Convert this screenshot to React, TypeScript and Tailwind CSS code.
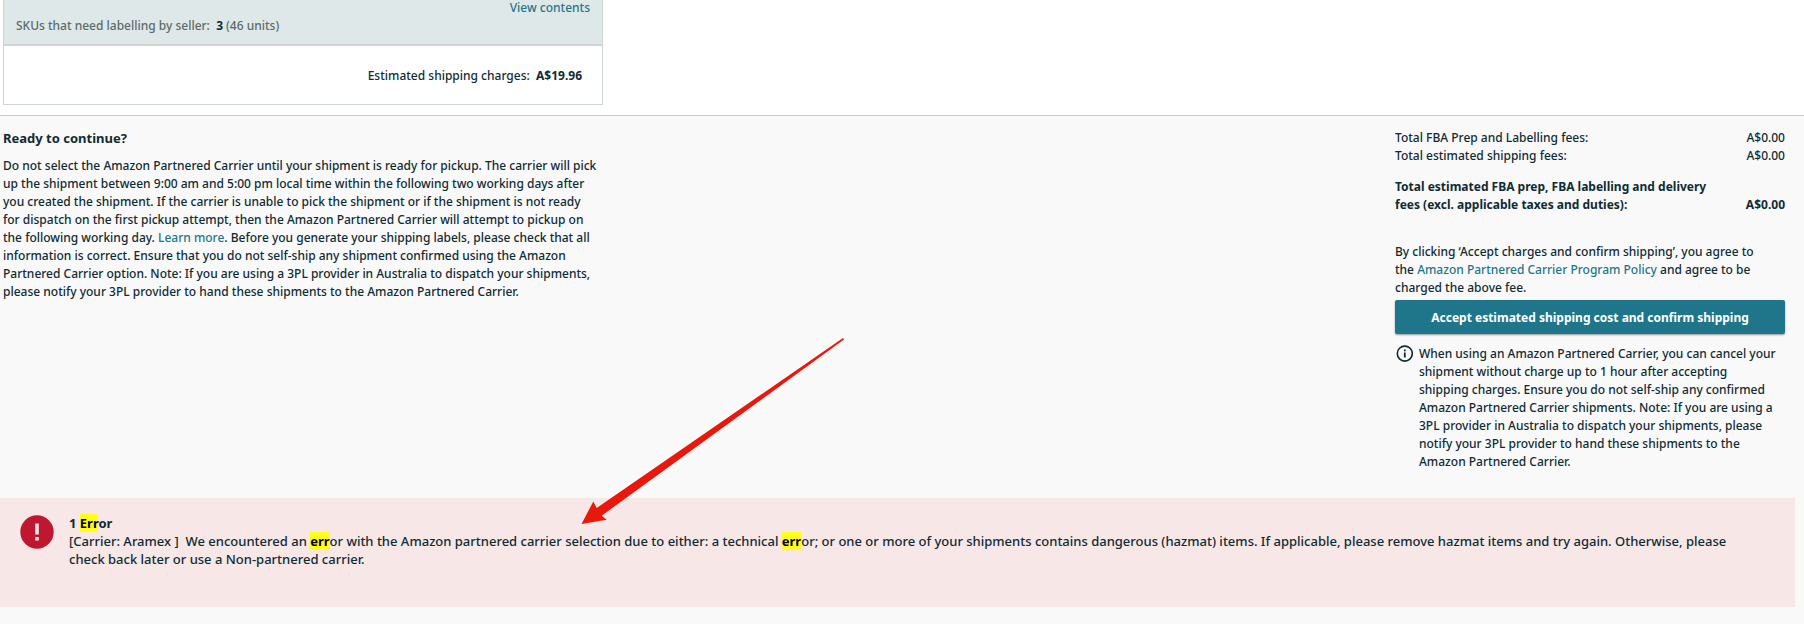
import React from 'react';

interface Fee {
  label: string;
  amount: string;
}

const fees: Fee[] = [
  { label: 'Total FBA Prep and Labelling fees:', amount: 'A$0.00' },
  { label: 'Total estimated shipping fees:', amount: 'A$0.00' },
];

const Mark: React.FC<{ children: React.ReactNode }> = ({ children }) => (
  <mark className="bg-[#ffff1a] font-bold text-black">{children}</mark>
);

const ShipmentSummary: React.FC = () => (
  <section className="ml-[3px] w-[600px] border border-t-0 border-[#cdd5d5] bg-white">
    <div className="border-b-2 border-[#cdd5d5] bg-[#dfe8e8] px-3 pb-[9px] text-[#5b6b6b]">
      <p className="-mt-px text-right">
        <a href="#contents" className="text-[#1f768a]">View contents</a>
      </p>
      <p>
        SKUs that need labelling by seller:&nbsp; <b className="text-[#0f2b33]">3</b> (46 units)
      </p>
    </div>
    <p className="px-5 pt-[21px] pb-[19px] text-right">
      Estimated shipping charges:&nbsp; <b>A$19.96</b>
    </p>
  </section>
);

const PickupNotes: React.FC = () => (
  <section className="w-[599px] pl-[3px]">
    <h2 className="mb-[10px] text-[13px] font-bold">Ready to continue?</h2>
    <p>
      Do not select the Amazon Partnered Carrier until your shipment is ready for pickup. The carrier will pick
      up the shipment between 9:00 am and 5:00 pm local time within the following two working days after
      you created the shipment. If the carrier is unable to pick the shipment or if the shipment is not ready
      for dispatch on the first pickup attempt, then the Amazon Partnered Carrier will attempt to pickup on
      the following working day. <a href="#learn-more" className="text-[#1f768a]">Learn more</a>. Before you
      generate your shipping labels, please check that all information is correct. Ensure that you do not
      self-ship any shipment confirmed using the Amazon Partnered Carrier option. Note: If you are using a 3PL
      provider in Australia to dispatch your shipments, please notify your 3PL provider to hand these shipments
      to the Amazon Partnered Carrier.
    </p>
  </section>
);

const InfoIcon = () => (
  <svg viewBox="0 0 18 18" className="h-[18px] w-[18px]" fill="none" stroke="currentColor" aria-hidden="true">
    <circle cx="9.8" cy="8.6" r="7.5" strokeWidth="1.6" />
    <path d="M9.8 7.5v5" strokeWidth="1.8" />
    <path d="M9.8 4.5v1.8" strokeWidth="1.8" />
  </svg>
);

const Charges: React.FC = () => (
  <section className="w-[390px]">
    <table className="w-full">
      <tbody>
        {fees.map((fee) => (
          <tr key={fee.label}>
            <td className="p-0">{fee.label}</td>
            <td className="p-0 text-right">{fee.amount}</td>
          </tr>
        ))}
        <tr className="align-bottom font-bold">
          <td className="px-0 pt-[13px] pb-0">
            Total estimated FBA prep, FBA labelling and delivery fees (excl. applicable taxes and duties):
          </td>
          <td className="w-[60px] px-0 pt-[13px] pb-0 text-right">A$0.00</td>
        </tr>
      </tbody>
    </table>
    <p className="mt-[29px] mb-[3px] pr-3">
      By clicking ‘Accept charges and confirm shipping’, you agree to the{' '}
      <a href="#policy" className="text-[#1f768a]">Amazon Partnered Carrier Program Policy</a> and agree to be
      charged the above fee.
    </p>
    <button
      type="button"
      className="h-[34px] w-full rounded-[2px] bg-[#1f768a] pt-px font-bold text-white shadow-[0_1px_2px_rgba(0,0,0,0.4)]"
    >
      Accept estimated shipping cost and confirm shipping
    </button>
    <div className="mt-[11px] grid grid-cols-[18px_1fr] gap-[6px]">
      <InfoIcon />
      <p className="pr-2">
        When using an Amazon Partnered Carrier, you can cancel your shipment without charge up to 1 hour after
        accepting shipping charges. Ensure you do not self-ship any confirmed Amazon Partnered Carrier
        shipments. Note: If you are using a 3PL provider in Australia to dispatch your shipments, please notify
        your 3PL provider to hand these shipments to the Amazon Partnered Carrier.
      </p>
    </div>
  </section>
);

const ErrorBanner: React.FC = () => (
  <section role="alert" className="mr-[9px] flex gap-[15px] bg-[#f7e7e7] pt-4 pr-10 pb-[39px] pl-5 text-[13px]">
    <svg viewBox="0 0 34 34" className="mt-px h-[34px] w-[34px] shrink-0" aria-hidden="true">
      <circle cx="17" cy="17" r="16.7" fill="#bf1730" />
      <path d="M15.2 8.5h3.6v11h-3.6zM15.2 22h3.6v3.4h-3.6z" fill="#f7e7e7" />
    </svg>
    <div>
      <h3 className="font-bold">
        1 <Mark>Err</Mark>or
      </h3>
      <p>
        [Carrier: Aramex ]&nbsp; We encountered an <Mark>err</Mark>or with the Amazon partnered carrier selection
        due to either: a technical <Mark>err</Mark>or; or one or more of your shipments contains dangerous
        (hazmat) items. If applicable, please remove hazmat items and try again. Otherwise, please check back
        later or use a Non-partnered carrier.
      </p>
    </div>
  </section>
);

const App: React.FC = () => {
  return (
    <div className="min-h-screen bg-[#f9f9f9] font-['Noto_Sans',sans-serif] text-[12px] leading-[18px] font-medium text-[#0f2b33]">
      <div className="border-b border-[#cccccc] bg-white pb-[10px]">
        <ShipmentSummary />
      </div>
      <div className="relative">
        <div className="flex items-start justify-between pt-[13px] pr-[19px] pb-[27px]">
          <PickupNotes />
          <Charges />
        </div>
        <ErrorBanner />
        {/* Arrow pointing at the error */}
        <svg
          viewBox="0 0 264 187"
          className="pointer-events-none absolute top-[222px] left-[581px] h-[187px] w-[264px]"
          aria-hidden="true"
        >
          <path d="M262 0L263 1.5L20.7 177.7L25.7 181.7L0.5 186L12.3 163.5L15.7 170Z" fill="#e8190c" />
        </svg>
      </div>
    </div>
  );
};

export default App;
